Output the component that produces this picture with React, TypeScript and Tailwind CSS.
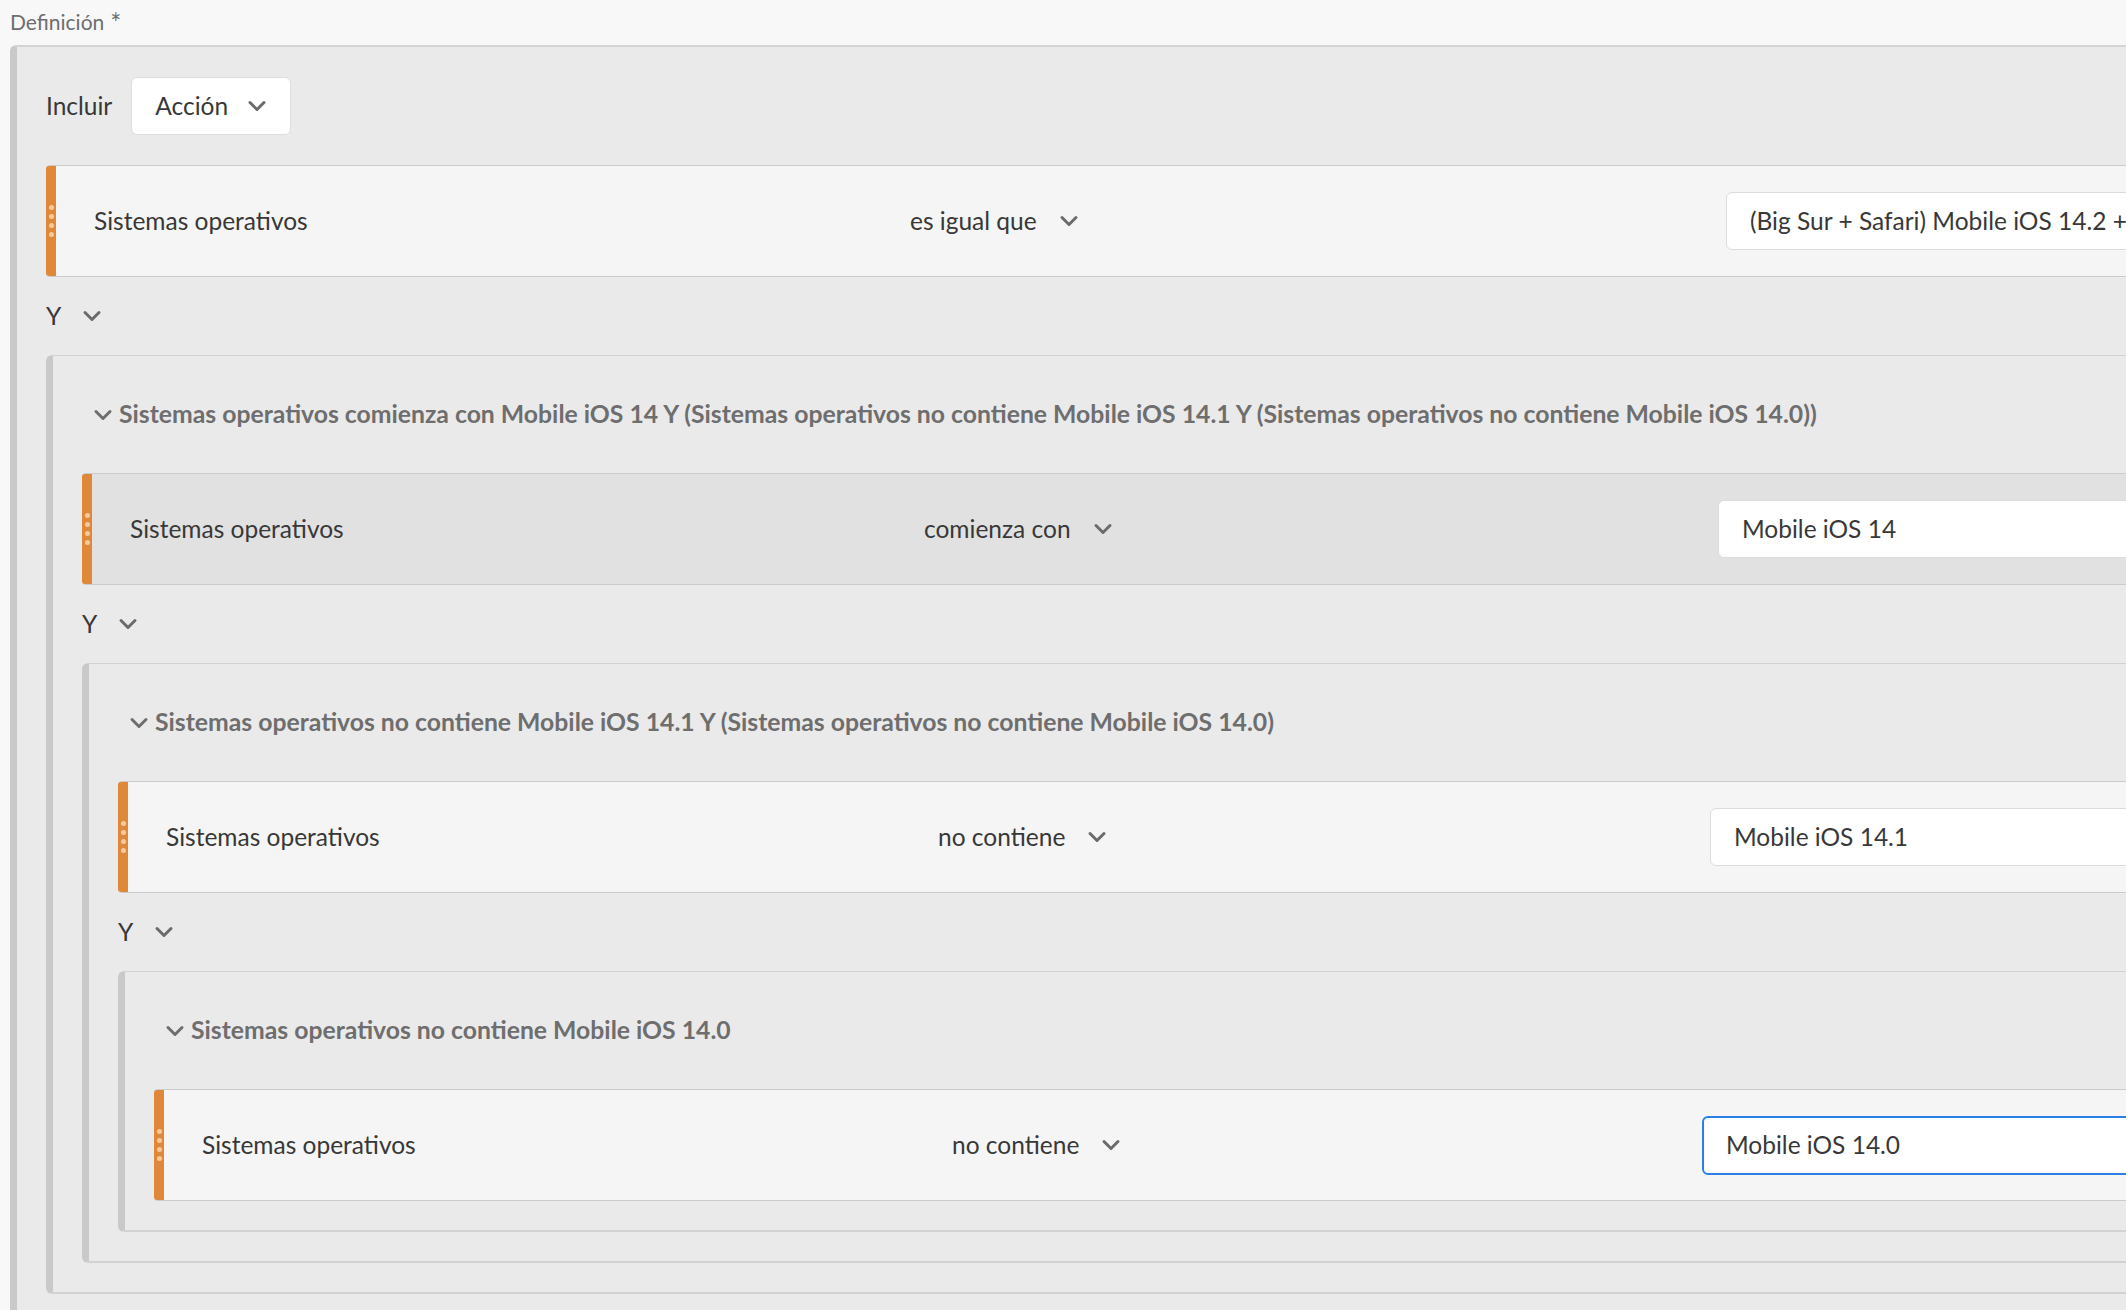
import type {ReactNode} from 'react';
import clsx from 'clsx';

function Chevron({className}: {className?: string}) {
  return (
    <svg
      viewBox="0 0 20 20"
      fill="none"
      stroke="currentColor"
      strokeWidth={3}
      strokeLinecap="round"
      strokeLinejoin="round"
      className={clsx('shrink-0', className)}
    >
      <path d="M3 6.5 10 13.5l7-7" />
    </svg>
  );
}

function Handle() {
  return (
    <div className="flex h-full w-[10px] shrink-0 flex-col items-center justify-center gap-[4px] rounded-l-[3px] bg-[#e0883a]">
      {[0, 1, 2, 3].map((i) => (
        <span key={i} className="block h-[5px] w-[5px] rounded-full bg-[#f6c99c]" />
      ))}
    </div>
  );
}

function Card({
  operator,
  value,
  hovered,
  focused,
}: {
  operator: string;
  value: string;
  hovered?: boolean;
  focused?: boolean;
}) {
  return (
    <div
      className={clsx(
        'flex h-[112px] items-center rounded-l-[4px] border-y border-[#cbcbcb]',
        hovered ? 'bg-[#e1e1e1]' : 'bg-[#f5f5f5]',
      )}
    >
      <Handle />
      <div className="grid flex-1 grid-cols-3 items-center pl-[38px] pr-[24px]">
        <span className="text-[#383838]">Sistemas operativos</span>
        <div className="flex items-center gap-[22px] text-[#383838]">
          <span>{operator}</span>
          <Chevron className="h-[20px] w-[20px] text-[#6b6b6b]" />
        </div>
        <div
          className={clsx(
            'flex items-center overflow-hidden whitespace-nowrap rounded-[6px] bg-white text-[#383838]',
            focused
              ? 'h-[59px] border-2 border-[#2d7fe4] pl-[22px]'
              : 'h-[58px] border border-[#dcdcdc] pl-[23px]',
          )}
        >
          {value}
        </div>
      </div>
    </div>
  );
}

function AndRow() {
  return (
    <div className="flex h-[78px] items-center gap-[21px] text-[#383838]">
      <span>Y</span>
      <Chevron className="h-[20px] w-[20px] text-[#6b6b6b]" />
    </div>
  );
}

function Group({title, children}: {title: string; children: ReactNode}) {
  return (
    <div className="rounded-l-[6px] border-l-[7px] border-t border-b-2 border-l-[#c9c9c9] border-t-[#d2d2d2] border-b-[#d2d2d2] bg-[#eaeaea] pb-[29px] pl-[29px] pr-[30px]">
      <div className="flex h-[117px] items-center gap-[6px] pl-[11px] text-[24.75px] font-bold text-[#6e6e6e]">
        <Chevron className="h-[20px] w-[20px] text-[#6e6e6e]" />
        <span className="whitespace-nowrap">{title}</span>
      </div>
      {children}
    </div>
  );
}

export default function App() {
  return (
    <div className="h-[1310px] w-[2126px] overflow-hidden bg-[#f8f8f8] font-['Lato','Noto_Sans',sans-serif] text-[24.5px] leading-none">
      <div className="flex h-[45px] items-start pl-[10px] pt-[11px] text-[21px] text-[#6e6e6e]">
        Definición <span className="ml-[6px] -mt-[1px] text-[26px]">*</span>
      </div>
      <div className="ml-[10px] min-h-[1400px] w-[2586px] rounded-tl-[6px] border-l-[7px] border-t-2 border-l-[#c9c9c9] border-t-[#d4d4d4] bg-[#eaeaea] pl-[29px] pr-[30px]">
        <div className="flex h-[118px] items-center gap-[19px]">
          <span className="text-[#383838]">Incluir</span>
          <div className="flex h-[58px] w-[160px] items-center justify-between rounded-[6px] border border-[#dedede] bg-white pl-[23px] pr-[23px] text-[#383838]">
            <span>Acción</span>
            <Chevron className="h-[20px] w-[20px] text-[#6b6b6b]" />
          </div>
        </div>
        <Card operator="es igual que" value="(Big Sur + Safari) Mobile iOS 14.2 + Mobile iOS 14.3 + Mobile iOS 14.4" />
        <AndRow />
        <Group title="Sistemas operativos comienza con Mobile iOS 14 Y (Sistemas operativos no contiene Mobile iOS 14.1 Y (Sistemas operativos no contiene Mobile iOS 14.0))">
          <Card operator="comienza con" value="Mobile iOS 14" hovered />
          <AndRow />
          <Group title="Sistemas operativos no contiene Mobile iOS 14.1 Y (Sistemas operativos no contiene Mobile iOS 14.0)">
            <Card operator="no contiene" value="Mobile iOS 14.1" />
            <AndRow />
            <Group title="Sistemas operativos no contiene Mobile iOS 14.0">
              <Card operator="no contiene" value="Mobile iOS 14.0" focused />
            </Group>
          </Group>
        </Group>
      </div>
    </div>
  );
}
